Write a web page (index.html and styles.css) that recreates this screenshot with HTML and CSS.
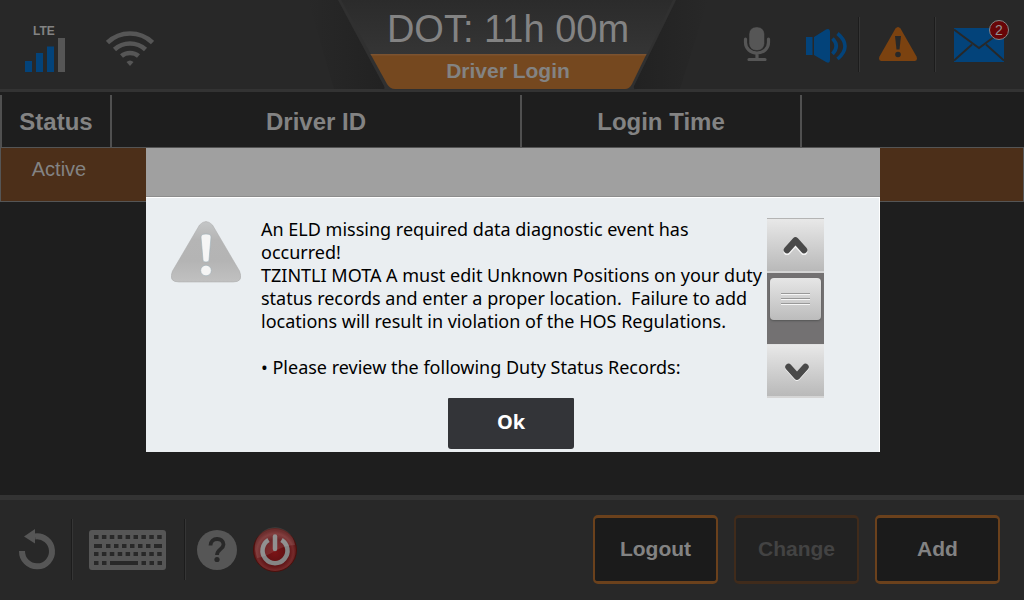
FILE: index.html
```html
<!DOCTYPE html>
<html lang="en">
<head>
<meta charset="utf-8">
<meta name="viewport" content="width=device-width, initial-scale=1">
<title>Driver Login</title>
<link rel="stylesheet" href="styles.css">
</head>
<body>
<div class="app">
  <header class="topbar">
    <div class="signals">
      <div class="cell">
        <span class="cell-label">LTE</span>
        <svg width="40" height="34" viewBox="0 0 40 34" aria-hidden="true">
          <path fill="#03437a" d="M0 23h7v11H0zM11 15h7v19h-7zM22 8.500h7V34h-7z"/>
          <path fill="#565656" d="M33 0h7v34h-7z"/>
        </svg>
      </div>
      <svg class="wifi" width="48" height="36" viewBox="0 0 48 36" aria-hidden="true">
        <g fill="none" stroke="#565656" stroke-width="4.600">
          <path d="M1.500 11.500Q11 2.500 24 2.500T46.500 11.500"/>
          <path d="M8.500 18.500Q15 12.500 24 12.500T39.500 18.500"/>
          <path d="M15.500 25Q19 22 24 22T32.500 25"/>
        </g>
        <path fill="#565656" d="M20.500 31Q24 28 27.500 31L24 35z"/>
      </svg>
    </div>

    <div class="banner">
      <svg class="banner-shape" viewBox="0 0 340 92" preserveAspectRatio="none" aria-hidden="true">
        <defs>
          <linearGradient id="bannerFill" x1="0" y1="0" x2="0" y2="1">
            <stop offset="0" stop-color="#2b2b2b"/>
            <stop offset="1" stop-color="#353535"/>
          </linearGradient>
          <linearGradient id="shadeL" x1="0" y1="0" x2="1" y2="0">
            <stop offset="0" stop-color="#202020" stop-opacity="0"/>
            <stop offset="1" stop-color="#202020" stop-opacity=".8"/>
          </linearGradient>
          <linearGradient id="shadeR" x1="1" y1="0" x2="0" y2="0">
            <stop offset="0" stop-color="#202020" stop-opacity="0"/>
            <stop offset="1" stop-color="#202020" stop-opacity=".8"/>
          </linearGradient>
        </defs>
        <path fill="url(#shadeL)" d="M-30 0H0L48 89H-4z"/>
        <path fill="url(#shadeR)" d="M370 0H338L294 89H342z"/>
        <path fill="#303030" d="M0 0H338L296 86Q295 90 300 90H42Q48 90 46 86z"/>
        <path fill="url(#bannerFill)" d="M3 0H335L309 54H33z"/>
        <path fill="#75481f" d="M32.500 54H308.500L294 84Q291.500 89 287 89H57Q52 89 49 84z"/>
        <path fill="#7c5330" d="M32.500 54H308.500L307.800 55.500H33.300z"/>
      </svg>
      <div class="clock">DOT: 11h 00m</div>
      <h1 class="page-title">Driver Login</h1>
    </div>

    <div class="tools">
      <svg class="mic" width="28" height="34" viewBox="0 0 28 34" aria-hidden="true">
        <path d="M2.500 12V15.500C2.500 21.500 7.500 26 14 26S25.500 21.500 25.500 15.500V12M14 26V32M6 32.500H22" fill="none" stroke="#565656" stroke-width="3.200" stroke-linecap="round"/>
        <rect x="6" y="0" width="15.500" height="23.500" rx="7" fill="#565656" stroke="#282828" stroke-width=".5"/>
      </svg>
      <svg class="speaker" width="42" height="34" viewBox="0 0 42 34" aria-hidden="true">
        <path fill="#03437a" d="M0 8H6.500V26H0zM8 8L20 .500Q24-1 24 3V31Q24 35 20 33L8 26z"/>
        <path d="M26.500 9.500Q34 17 26.500 25M31.500 4.500Q46.500 17 31.500 30" fill="none" stroke="#03437a" stroke-width="3.600"/>
      </svg>
      <div class="divided">
        <svg width="38" height="34" viewBox="0 0 38 34" aria-hidden="true">
          <path fill="#7b4210" d="M16.500 1.500Q19-1.500 21.500 1.500L37.500 29.500Q39 34 35.500 34H2.500Q-1 34 .500 29.500z"/>
          <path fill="#282828" d="M16 9H22L20.500 22.500H17.500z"/>
          <circle cx="19" cy="27.500" r="2.800" fill="#282828"/>
        </svg>
      </div>
      <div class="divided">
        <div class="mail">
          <svg width="50" height="34" viewBox="0 0 50 34" aria-hidden="true">
            <path fill="#03437a" d="M0 0H50V34H0z"/>
            <path d="M0 1.500L21.500 17.500L25 20L28.500 17.500L50 1.500M18 16.500L0 32.500M32 16.500L50 32.500" fill="none" stroke="#282828" stroke-width="2"/>
          </svg>
          <span class="badge">2</span>
        </div>
      </div>
    </div>
  </header>

  <main class="content">
    <table class="logins">
      <thead>
        <tr><th class="col-status" scope="col">Status</th><th class="col-driver" scope="col">Driver ID</th><th class="col-time" scope="col">Login Time</th><th></th></tr>
      </thead>
      <tbody>
        <tr><td class="status">Active</td><td></td><td></td><td></td></tr>
      </tbody>
    </table>
  </main>

  <footer class="bottombar">
    <div class="foot-tools">
      <button class="icon-btn back" type="button" aria-label="Back">
        <svg width="38" height="42" viewBox="0 0 38 42">
          <path d="M4 23A15 15 0 1 0 17 8.500" fill="none" stroke="#565656" stroke-width="6"/>
          <path fill="#565656" d="M6 8.500L17 1V15.500z"/>
        </svg>
      </button>
      <div class="foot-group keys">
        <button class="icon-btn" type="button" aria-label="Keyboard">
          <svg width="77" height="40" viewBox="0 0 77 40">
            <rect width="77" height="40" rx="3" fill="#565656"/>
            <g fill="none" stroke="#282828" stroke-width="4">
              <path d="M5 7H73" stroke-dasharray="4.500 3.400"/>
              <path d="M5 16H13M65 16H73"/>
              <path d="M17 16H62" stroke-dasharray="4.500 3.500"/>
              <path d="M5 24H73" stroke-dasharray="4.500 3.400"/>
              <path d="M5 33H9.500M13 33H17.500M21 33H49M52.500 33H57M60.500 33H65M68.500 33H73"/>
            </g>
          </svg>
        </button>
      </div>
      <div class="foot-group help">
        <button class="icon-btn" type="button" aria-label="Help">
          <svg width="40" height="40" viewBox="0 0 40 40">
            <circle cx="20" cy="20" r="20" fill="#565656"/>
            <path d="M13.500 15.500C13.500 7 26.500 7 26.500 14.500C26.500 19 20 19.500 20 25" fill="none" stroke="#282828" stroke-width="3.800"/>
            <circle cx="20" cy="29.500" r="2.600" fill="#282828"/>
          </svg>
        </button>
        <button class="icon-btn power" type="button" aria-label="Power">
          <svg width="44" height="46" viewBox="0 0 44 46">
            <defs>
              <radialGradient id="powerFill" cx=".5" cy=".55" r=".5">
                <stop offset="0" stop-color="#7c1416"/>
                <stop offset=".6" stop-color="#5c1012"/>
                <stop offset=".85" stop-color="#752a2a"/>
                <stop offset="1" stop-color="#5e1818"/>
              </radialGradient>
            </defs>
            <circle cx="22" cy="23" r="21.500" fill="url(#powerFill)" stroke="#4a100c"/>
            <path d="M15.500 13A12.500 12.500 0 1 0 28.500 13" fill="none" stroke="#858585" stroke-width="4.500"/>
            <path d="M22 9.500V22" stroke="#858585" stroke-width="4.500" stroke-linecap="round"/>
            <path fill="#fff" fill-opacity=".1" d="M2 23A20 20 0 0 1 42 18Q32 18 22 24T4 31z"/>
          </svg>
        </button>
      </div>
    </div>
    <div class="actions">
      <button class="action" type="button">Logout</button>
      <button class="action" type="button" disabled>Change</button>
      <button class="action" type="button">Add</button>
    </div>
  </footer>
</div>

<dialog class="alert" open aria-label="Diagnostic event">
  <div class="alert-head"></div>
  <div class="alert-body">
    <div class="alert-row">
      <svg class="alert-icon" width="70" height="62" viewBox="0 0 70 62" aria-hidden="true">
        <defs>
          <linearGradient id="alertFill" x1="0" y1="0" x2="0" y2="1">
            <stop offset="0" stop-color="#c4c6c7"/>
            <stop offset=".3" stop-color="#b5b5b5"/>
            <stop offset=".65" stop-color="#b4b4b4"/>
            <stop offset="1" stop-color="#c1c1c1"/>
          </linearGradient>
        </defs>
        <path fill="url(#alertFill)" stroke="#a9a9a9" stroke-width=".500" d="M28.500 4Q35-3 41.500 4L68.500 50Q73 61 62 61H8Q-3 61 1.500 50z"/>
        <path fill="#f5f5f5" stroke="#9eb0b8" stroke-width=".600" d="M30 16Q30 13 35 13T40 16L38 39Q38 41 35 41T32 39z"/>
        <circle cx="35" cy="49.500" r="5.300" fill="#f5f5f5" stroke="#9eb0b8" stroke-width=".600"/>
      </svg>
      <div class="message">
        <p>An ELD missing required data diagnostic event has<br>occurred!</p>
        <p>TZINTLI MOTA A must edit Unknown Positions on your duty<br>status records and enter a proper location.&nbsp; Failure to add<br>locations will result in violation of the HOS Regulations.</p>
        <p class="review">• Please review the following Duty Status Records:</p>
      </div>
      <div class="scroller">
        <button class="scroll-btn" type="button" aria-label="Scroll up">
          <svg width="26" height="20" viewBox="0 0 26 20"><path d="M4 16L12.500 6.500L21 16" transform="translate(0 1)" fill="none" stroke="#f4f4f4" stroke-width="6.500" stroke-linecap="round" stroke-linejoin="round"/><path d="M4 15L12.500 5.500L21 15" fill="none" stroke="#494949" stroke-width="6.500" stroke-linecap="round" stroke-linejoin="round"/></svg>
        </button>
        <div class="track"><div class="thumb"><i></i><i></i><i></i></div></div>
        <button class="scroll-btn down" type="button" aria-label="Scroll down">
          <svg width="26" height="20" viewBox="0 0 26 20"><path d="M5.500 6L14 15.500L22.500 6" transform="translate(0 1)" fill="none" stroke="#f4f4f4" stroke-width="6.500" stroke-linecap="round" stroke-linejoin="round"/><path d="M5.500 6L14 15.500L22.500 6" fill="none" stroke="#494949" stroke-width="6.500" stroke-linecap="round" stroke-linejoin="round"/></svg>
        </button>
      </div>
    </div>
    <button class="ok" type="button">Ok</button>
  </div>
</dialog>
</body>
</html>
```
FILE: styles.css
```css
* { box-sizing: border-box; }

body {
  margin: 0;
  background: #1e1e1e;
  color: #838383;
  font-family: "Liberation Sans", Arial, sans-serif;
}

button { font-family: inherit; cursor: pointer; }
svg { display: block; flex: none; }

.app {
  min-height: 100vh;
  display: flex;
  flex-direction: column;
}

/* Top bar */
.topbar {
  display: grid;
  grid-template-columns: 1fr 340px 1fr;
  height: 92px;
  padding-right: 8px;
  background: #282828;
  border-bottom: 3px solid #333;
}

.signals {
  display: flex;
  align-items: flex-start;
  gap: 41px;
  padding: 24px 0 0 25px;
}
.cell-label {
  display: block;
  padding-left: 8px;
  font-size: 12px;
  font-weight: bold;
  line-height: 14px;
}
.wifi { margin-top: 7px; }

.banner {
  position: relative;
  text-align: center;
}
.banner-shape {
  position: absolute;
  inset: 0;
  width: 100%;
  height: 92px;
  overflow: visible;
}
.clock {
  position: relative;
  padding-top: 4px;
  font-size: 38px;
  line-height: 50px;
}
.page-title {
  position: relative;
  margin: 0;
  font-size: 21px;
  line-height: 34px;
}

.tools {
  display: flex;
  justify-content: flex-end;
  align-items: flex-start;
  padding: 17px 12px 0 0;
}
.mic { margin: 10px 35px 0 0; }
.speaker { margin: 12px 11px 0 0; }
.divided {
  height: 55px;
  padding: 10px 18px 0 19px;
  border-left: 1px solid #353535;
  box-shadow: -1px 0 #1c1c1c;
}
.divided:last-child { padding: 11px 0 0 18px; }
.mail { position: relative; }
.badge {
  position: absolute;
  top: -8px;
  right: -5px;
  width: 20px;
  height: 20px;
  border: 1px solid #858585;
  border-radius: 50%;
  background: #680507;
  color: #929292;
  font-size: 14px;
  line-height: 19px;
  text-align: center;
}

/* Login table */
.content { flex: 1; padding-top: 3px; }
.logins {
  width: 100%;
  table-layout: fixed;
  border-collapse: separate;
  border-spacing: 0;
}
.logins th {
  height: 52px;
  padding: 2px 0 0;
  border-left: 2px solid #505050;
  font-size: 24px;
  line-height: 50px;
}
.col-status { width: 110px; }
.col-driver { width: 410px; }
.col-time { width: 280px; }
.logins td {
  height: 55px;
  padding: 10px 0 0;
  background: #4c2f19;
  border: solid #555;
  border-width: 1px 0;
  font-size: 20px;
  line-height: 22px;
  text-align: center;
  vertical-align: top;
}
.logins td:first-child { border-left-width: 1px; padding-left: 7px; }
.logins td:last-child { border-right-width: 1px; }

/* Bottom bar */
.bottombar {
  display: flex;
  justify-content: space-between;
  align-items: flex-start;
  height: 105px;
  padding: 15px 24px 0 18px;
  background: #282828;
  border-top: 5px solid #333;
}
.foot-tools { display: flex; padding-top: 4px; }
.icon-btn {
  padding: 0;
  border: 0;
  background: none;
}
.back { width: 54px; height: 60px; }
.foot-group {
  display: flex;
  align-items: center;
  height: 61px;
  border-left: 1px solid #353535;
  box-shadow: -1px 0 #1c1c1c;
}
.keys { width: 113px; padding-left: 16px; }
.help { gap: 16px; padding-left: 11px; }

.actions { display: flex; gap: 16px; }
.action {
  width: 125px;
  height: 69px;
  padding: 0 0 2px;
  border: solid #6b411c;
  border-width: 3px 2px;
  border-radius: 5px;
  background: #1b1b1b;
  color: #838383;
  font-size: 21px;
  font-weight: bold;
}
.action:disabled {
  border-color: #402b1b;
  background: #222;
  color: #434343;
}

/* Alert */
.alert {
  position: fixed;
  inset: 0 0 0 2px;
  width: min(734px, 94vw);
  height: fit-content;
  margin: auto;
  padding: 0;
  border: 0;
  background: #eaeef1;
  color: #000;
  font-family: "Noto Sans", "DejaVu Sans Condensed", sans-serif;
}
.alert-head {
  height: 49px;
  background: #a0a0a0;
  border-bottom: 1px solid #8d8d8d;
}
.alert-body {
  padding: 20px 3px 3px 0;
  border-top: 1px solid #fff;
  border-right: 1px solid #fff;
}
.alert-row {
  display: flex;
  align-items: flex-start;
  padding: 0 52px 0 25px;
}
.alert-icon { margin-top: 3px; }
.message {
  flex: 1;
  min-width: 0;
  padding-left: 20px;
  font-size: 18px;
  line-height: 23px;
  white-space: nowrap;
}
.message p { margin: 0; }
.message .review { margin-top: 23px; }

.scroller {
  display: flex;
  flex-direction: column;
  width: 57px;
  height: 180px;
}
.scroll-btn {
  display: grid;
  place-items: center;
  height: 55px;
  padding: 0;
  border: 0;
  border-top: 1px solid #b4b4b4;
  border-bottom: 2px solid #d5d5d5;
  background: linear-gradient(#e8e8e8, #b9b9b9);
}
.scroll-btn.down { height: 54px; border-top-color: #e2e2e2; }
.track {
  flex: 1;
  padding: 5px 3px;
  background: #737172;
}
.thumb {
  display: flex;
  flex-direction: column;
  align-items: center;
  justify-content: center;
  gap: 3px;
  height: 42px;
  border-radius: 4px;
  background: linear-gradient(#e6e6e6, #bcbcbc);
  box-shadow: 0 1px 2px #555;
}
.thumb i {
  width: 29px;
  height: 2px;
  border-top: 1px solid #999;
  border-bottom: 1px solid #f6f6f6;
}

.ok {
  display: block;
  width: 126px;
  height: 51px;
  margin: 0 auto;
  padding: 0 0 4px;
  border: 0;
  border-radius: 1px 1px 3px 3px;
  background: #333438;
  color: #fff;
  font-size: 20px;
  font-weight: bold;
}
```
